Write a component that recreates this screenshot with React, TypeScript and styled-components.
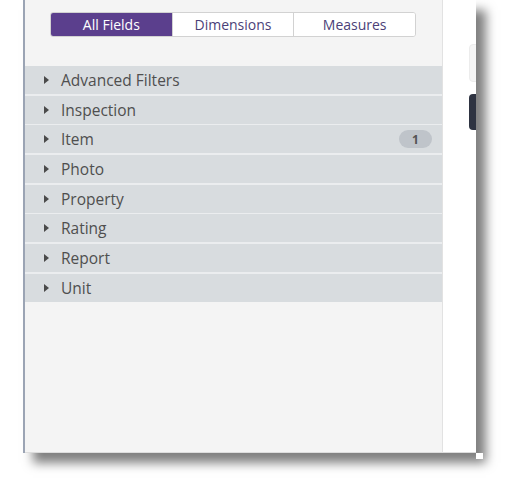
import React from "react";
import styled, { createGlobalStyle } from "styled-components";

const Global = createGlobalStyle`
  html, body { margin: 0; padding: 0; background: #ffffff; }
  body { font-family: "Open Sans", "Liberation Sans", sans-serif; }
`;

const Page = styled.div`
  width: 506px;
  height: 481px;
  background: #ffffff;
  overflow: hidden;
`;

const Frame = styled.div`
  margin-left: 23px;
  width: 453px;
  height: 453px;
  display: flex;
  border-left: 2px solid #9ba4b4;
  box-sizing: border-box;
  box-shadow: 10px 10px 10px rgba(0, 0, 0, 0.5);
  position: relative;
`;

const Sidebar = styled.div`
  flex: 0 0 418px;
  background: #f4f4f4;
  border-right: 1px solid #e2e2e2;
  border-bottom: 1px solid #dddddd;
  box-sizing: border-box;
  display: flex;
  flex-direction: column;
`;

const TabBar = styled.div`
  display: flex;
  margin: 12px 0 0 25px;
  width: 366px;
  height: 25px;
  border: 1px solid #d2d2d2;
  border-radius: 3px;
  box-sizing: border-box;
  overflow: hidden;
  background: #ffffff;
`;

const Tab = styled.div<{ $active?: boolean }>`
  flex: 1;
  display: flex;
  align-items: center;
  justify-content: center;
  font-size: 14px;
  color: ${(p) => (p.$active ? "#ffffff" : "#4b3f78")};
  background: ${(p) => (p.$active ? "#5b3f8d" : "#ffffff")};
  & + & {
    border-left: 1px solid #d2d2d2;
  }
`;

const List = styled.div`
  margin-top: 29px;
  display: flex;
  flex-direction: column;
  gap: 1.7px;
  background: #ebedef;
`;

const Row = styled.div`
  height: 28px;
  display: flex;
  align-items: center;
  background: #d8dcdf;
  padding: 0 10px 0 19px;
  color: #4f4f4f;
  font-size: 15.5px;
`;

const Caret = styled.span`
  width: 0;
  height: 0;
  border-top: 4px solid transparent;
  border-bottom: 4px solid transparent;
  border-left: 5px solid #4a4a4a;
  margin-right: 12px;
`;

const Label = styled.span`
  flex: 1;
`;

const Badge = styled.span`
  width: 33px;
  height: 18px;
  border-radius: 9px;
  background: #bfc4ca;
  color: #555555;
  font-size: 12px;
  font-weight: 700;
  display: flex;
  align-items: center;
  justify-content: center;
`;

const RightPane = styled.div`
  flex: 1;
  background: #ffffff;
  overflow: hidden;
  display: flex;
  flex-direction: column;
  padding-top: 44px;
  border-bottom: 1px solid #dddddd;
`;

const GhostTab = styled.div`
  margin-left: 26px;
  width: 20px;
  height: 36px;
  border-radius: 4px;
  background: #f5f5f5;
  border: 1px solid #ececec;
`;

const DarkTab = styled.div`
  margin-left: 26px;
  margin-top: 12px;
  width: 20px;
  height: 36px;
  border-radius: 4px;
  background: #2e3341;
`;

const CornerGap = styled.div`
  position: absolute;
  right: -7px;
  bottom: -6px;
  width: 7px;
  height: 6px;
  background: #ffffff;
`;

const fields: { name: string; count?: number }[] = [
  { name: "Advanced Filters" },
  { name: "Inspection" },
  { name: "Item", count: 1 },
  { name: "Photo" },
  { name: "Property" },
  { name: "Rating" },
  { name: "Report" },
  { name: "Unit" },
];

export default function App() {
  return (
    <Page>
      <Global />
      <Frame>
        <Sidebar>
          <TabBar>
            <Tab $active>All Fields</Tab>
            <Tab>Dimensions</Tab>
            <Tab>Measures</Tab>
          </TabBar>
          <List>
            {fields.map((f) => (
              <Row key={f.name}>
                <Caret />
                <Label>{f.name}</Label>
                {f.count !== undefined && <Badge>{f.count}</Badge>}
              </Row>
            ))}
          </List>
        </Sidebar>
        <RightPane>
          <GhostTab />
          <DarkTab />
        </RightPane>
        <CornerGap />
      </Frame>
    </Page>
  );
}
